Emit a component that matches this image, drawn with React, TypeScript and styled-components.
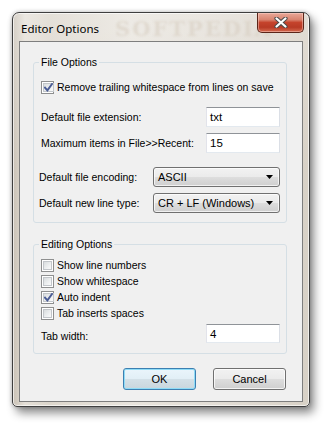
import React from "react";
import styled, { createGlobalStyle } from "styled-components";

const GlobalStyle = createGlobalStyle`
  html, body { margin: 0; padding: 0; background: #ffffff; }
  body { font-family: "Liberation Sans", Arial, sans-serif; font-size: 10.5px; color: #000; }
  * { box-sizing: border-box; }
`;

const Page = styled.div`
  width: 330px;
  height: 428px;
  padding: 12px 0 0 12px;
`;

const Window = styled.div`
  position: relative;
  width: 298px;
  height: 395px;
  border: 1px solid #3f3f3f;
  border-radius: 7px 7px 5px 5px;
  background:
    linear-gradient(180deg, rgba(255,255,255,0.25) 0%, rgba(255,255,255,0) 40%),
    linear-gradient(90deg, #c9c1b5 0%, #e4dfd7 4%, #dcd6cc 12%, #e8e4dd 40%, #e2ddd5 70%, #d8d1c6 100%);
  box-shadow: inset 0 0 0 1px rgba(255,255,255,0.65), 4px 6px 10px rgba(0,0,0,0.45), 0 0 4px rgba(0,0,0,0.25);
  display: flex;
  flex-direction: column;
`;

const TitleBar = styled.div`
  position: relative;
  height: 28px;
  flex: none;
  display: flex;
  align-items: center;
  padding: 2px 0 0 8px;
`;

const Title = styled.span`
  position: relative;
  font-family: "Noto Sans", "Open Sans", sans-serif;
  font-size: 11.5px;
  color: #000;
`;

const TitleWatermark = styled.span`
  position: absolute;
  left: 102px;
  top: 3px;
  font-family: "DejaVu Serif", serif;
  font-weight: bold;
  font-size: 21px;
  letter-spacing: 2px;
  color: rgba(214, 204, 190, 0.5);
  filter: blur(1.3px);
  pointer-events: none;
`;

const CloseButton = styled.div`
  position: absolute;
  top: 0;
  right: 5px;
  width: 47px;
  height: 20px;
  border: 1px solid #5b2519;
  border-top: none;
  border-radius: 0 0 5px 5px;
  background: linear-gradient(180deg, #e9a898 0%, #d98470 35%, #c5432c 50%, #b83a25 75%, #d56a4f 100%);
  box-shadow: inset 0 0 0 1px rgba(255, 220, 210, 0.45);
  display: flex;
  align-items: center;
  justify-content: center;
`;

const Client = styled.div`
  position: relative;
  flex: 1;
  margin: 0 6px 4px 6px;
  border: 1px solid #7e7e7e;
  background: #f0f0f0;
  padding: 13px 15px 0 13px;
  display: flex;
  flex-direction: column;
`;

const Group = styled.fieldset<{ $top: number; $bottom: number; $gap?: number }>`
  margin: 0;
  min-width: 0;
  border: 1px solid #d5dfe5;
  border-radius: 3px;
  padding: ${(p) => p.$top}px 6px ${(p) => p.$bottom}px 7px;
  display: flex;
  flex-direction: column;
  gap: ${(p) => p.$gap ?? 0}px;
  & + & { margin-top: 14px; }
`;

const Legend = styled.legend`
  margin-left: -2px;
  padding: 0 2px;
  line-height: 14px;
  height: 14px;
  color: #000;
`;

const CheckRow = styled.label`
  height: 13px;
  display: flex;
  align-items: center;
  gap: 3px;
  line-height: 13px;
  white-space: nowrap;
`;

const Box = styled.span`
  width: 13px;
  height: 13px;
  flex: none;
  border: 1px solid #8e8f8f;
  background: #fff;
  padding: 1px;
  display: flex;
`;

const BoxInner = styled.span`
  flex: 1;
  border: 1px solid #c2c6ca;
  background: linear-gradient(135deg, #d9dcde 0%, #eef0f1 60%, #fafafa 100%);
  display: flex;
  align-items: center;
  justify-content: center;
`;

const FieldRow = styled.div<{ $mt: number; $h?: number }>`
  margin-top: ${(p) => p.$mt}px;
  height: ${(p) => p.$h ?? 20}px;
  display: flex;
  align-items: center;
  justify-content: space-between;
`;

const ComboRow = styled(FieldRow)`
  margin-left: -2px;
`;

const Label = styled.span<{ $low?: boolean }>`
  line-height: 13px;
  white-space: nowrap;
  align-self: ${(p) => (p.$low ? "flex-end" : "center")};
`;

const TextBox = styled.div`
  width: 74px;
  height: 100%;
  border: 1px solid #abadb3;
  border-top-color: #8f9398;
  border-right-color: #dbdfe6;
  border-bottom-color: #e3e9ef;
  border-left-color: #e2e3ea;
  background: #fff;
  padding: 0 3px;
  display: flex;
  align-items: center;
  font-size: 11.5px;
  line-height: 14px;
`;

const Combo = styled.div`
  width: 127px;
  height: 100%;
  border: 1px solid #707070;
  border-radius: 3px;
  background: linear-gradient(180deg, #f2f2f2 0%, #ebebeb 48%, #dddddd 52%, #cfcfcf 100%);
  box-shadow: inset 0 0 0 1px rgba(255, 255, 255, 0.7);
  display: flex;
  align-items: center;
  justify-content: space-between;
  padding: 0 6px 0 4px;
  font-size: 11px;
`;

const ButtonRow = styled.div`
  margin-top: 14px;
  margin-right: 1px;
  display: flex;
  justify-content: flex-end;
  gap: 17px;
`;

const Button = styled.button<{ $default?: boolean }>`
  width: 73px;
  height: 22px;
  padding: 0;
  font-family: "Liberation Sans", Arial, sans-serif;
  font-size: 11px;
  color: #000;
  border-radius: 3px;
  border: 1px solid ${(p) => (p.$default ? "#3c7fb1" : "#707070")};
  background: ${(p) =>
    p.$default
      ? "linear-gradient(180deg, #eaf5fb 0%, #e2eff6 48%, #d3e0e7 52%, #c9d6dd 100%)"
      : "linear-gradient(180deg, #f2f2f2 0%, #ebebeb 48%, #dddddd 52%, #cfcfcf 100%)"};
  box-shadow: inset 0 0 0 1px ${(p) => (p.$default ? "#8fdcf7" : "rgba(255,255,255,0.75)")};
`;

const Check = () => (
  <svg width="9" height="9" viewBox="0 0 9 9">
    <path d="M1 4.6 L3.4 7.4 L8 1" fill="none" stroke="#4a5c95" strokeWidth="1.9" strokeLinecap="square" />
  </svg>
);

const CheckBox: React.FC<{ checked?: boolean; label: string }> = ({ checked, label }) => (
  <CheckRow>
    <Box>
      <BoxInner>{checked && <Check />}</BoxInner>
    </Box>
    <span>{label}</span>
  </CheckRow>
);

const Arrow = () => (
  <svg width="7" height="4" viewBox="0 0 7 4">
    <path d="M0 0 H7 L3.5 4 Z" fill="#000" />
  </svg>
);

const CloseGlyph = () => (
  <svg width="14" height="11" viewBox="0 0 14 11">
    <path d="M2.5 1.5 L11.5 9.5 M11.5 1.5 L2.5 9.5" stroke="#4a4a4a" strokeWidth="4.2" strokeLinecap="round" />
    <path d="M2.5 1.5 L11.5 9.5 M11.5 1.5 L2.5 9.5" stroke="#ffffff" strokeWidth="2.2" strokeLinecap="round" />
  </svg>
);

export default function App() {
  return (
    <Page>
      <GlobalStyle />
      <Window>
        <TitleBar>
          <TitleWatermark>SOFTPEDIA</TitleWatermark>
          <Title>Editor Options</Title>
          <CloseButton>
            <CloseGlyph />
          </CloseButton>
        </TitleBar>
        <Client>
          <Group $top={12} $bottom={9}>
            <Legend>File Options</Legend>
            <CheckBox checked label="Remove trailing whitespace from lines on save" />
            <FieldRow $mt={13}>
              <Label>Default file extension:</Label>
              <TextBox>txt</TextBox>
            </FieldRow>
            <FieldRow $mt={6}>
              <Label>Maximum items in File&gt;&gt;Recent:</Label>
              <TextBox>15</TextBox>
            </FieldRow>
            <ComboRow $mt={14}>
              <Label>Default file encoding:</Label>
              <Combo>
                <span>ASCII</span>
                <Arrow />
              </Combo>
            </ComboRow>
            <ComboRow $mt={6}>
              <Label>Default new line type:</Label>
              <Combo>
                <span>CR + LF (Windows)</span>
                <Arrow />
              </Combo>
            </ComboRow>
          </Group>
          <Group $top={8} $bottom={10} $gap={3}>
            <Legend>Editing Options</Legend>
            <CheckBox label="Show line numbers" />
            <CheckBox label="Show whitespace" />
            <CheckBox checked label="Auto indent" />
            <CheckBox label="Tab inserts spaces" />
            <FieldRow $mt={1} $h={19}>
              <Label $low>Tab width:</Label>
              <TextBox>4</TextBox>
            </FieldRow>
          </Group>
          <ButtonRow>
            <Button $default>OK</Button>
            <Button>Cancel</Button>
          </ButtonRow>
        </Client>
      </Window>
    </Page>
  );
}
